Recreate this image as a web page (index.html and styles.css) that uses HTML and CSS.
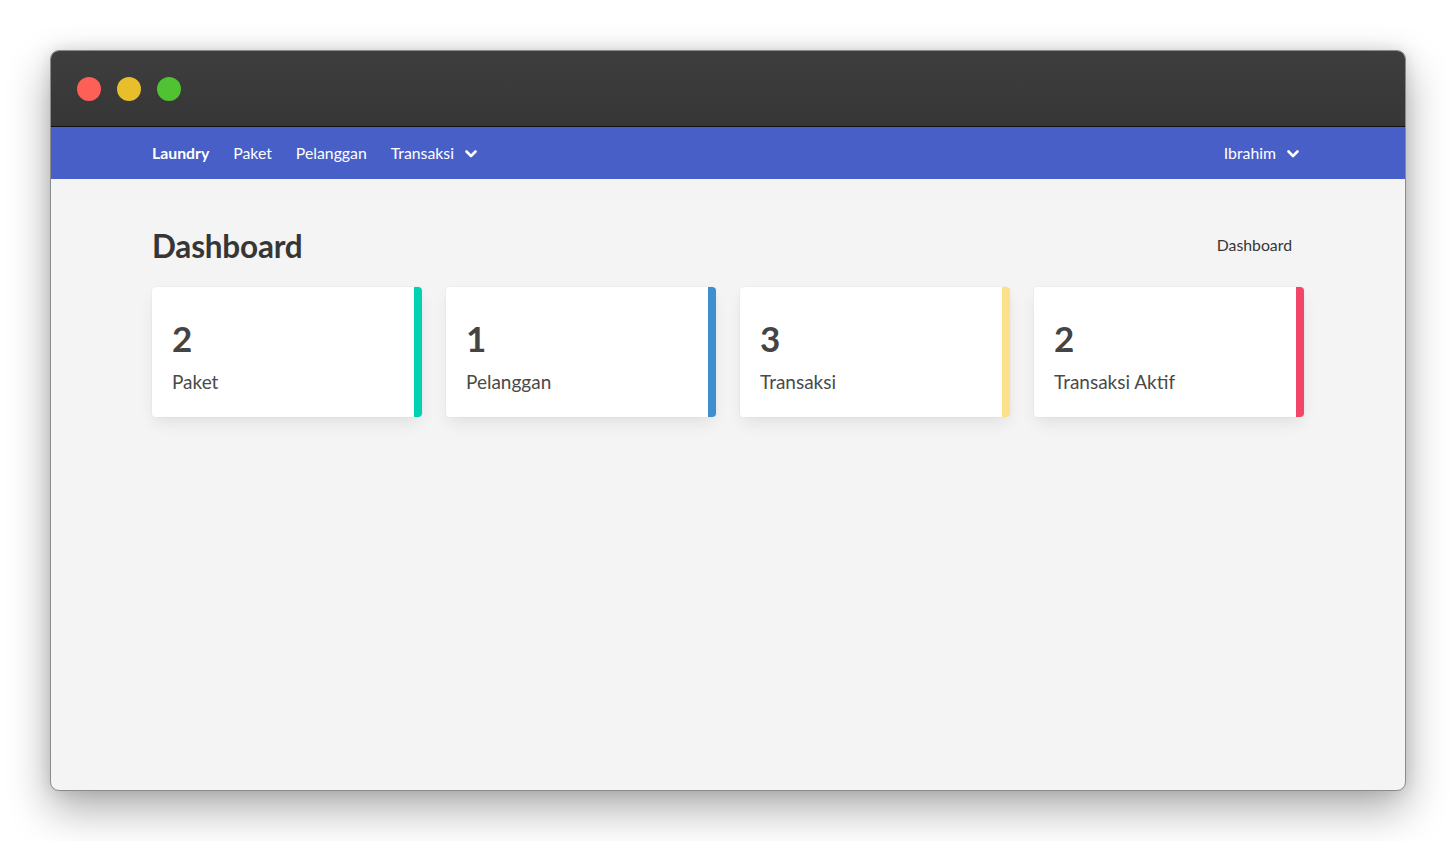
FILE: index.html
```html
<!DOCTYPE html>
<html>
<head>
<meta charset="utf-8">
<link rel="stylesheet" href="styles.css">
</head>
<body>
<div class="window">
  <div class="titlebar">
    <span class="dot red"></span>
    <span class="dot yellow"></span>
    <span class="dot green"></span>
  </div>
  <nav class="navbar">
    <div class="container nav-inner">
      <div class="nav-start">
        <a class="nav-item brand">Laundry</a>
        <a class="nav-item">Paket</a>
        <a class="nav-item">Pelanggan</a>
        <a class="nav-item">Transaksi
          <svg class="chev" viewBox="0 0 12 8" width="12" height="8"><path d="M1.5 1.5 L6 6 L10.5 1.5" fill="none" stroke="#fff" stroke-width="2.6" stroke-linecap="round" stroke-linejoin="round"/></svg>
        </a>
      </div>
      <div class="nav-end">
        <a class="nav-item">Ibrahim
          <svg class="chev" viewBox="0 0 12 8" width="12" height="8"><path d="M1.5 1.5 L6 6 L10.5 1.5" fill="none" stroke="#fff" stroke-width="2.6" stroke-linecap="round" stroke-linejoin="round"/></svg>
        </a>
      </div>
    </div>
  </nav>
  <main class="content">
    <div class="container">
      <div class="header-row">
        <h1 class="title">Dashboard</h1>
        <span class="crumb">Dashboard</span>
      </div>
      <div class="cards">
        <div class="card c-primary"><div class="num">2</div><div class="label">Paket</div></div>
        <div class="card c-info"><div class="num">1</div><div class="label">Pelanggan</div></div>
        <div class="card c-warning"><div class="num">3</div><div class="label">Transaksi</div></div>
        <div class="card c-danger"><div class="num">2</div><div class="label">Transaksi Aktif</div></div>
      </div>
    </div>
  </main>
</div>
</body>
</html>
```
FILE: styles.css
```css
* { box-sizing: border-box; }
html, body { margin: 0; padding: 0; background: #ffffff; }
body {
  font-family: "Lato", "Noto Sans", sans-serif;
  color: #4a4a4a;
  padding: 50px 50px 51px 50px;
  min-height: 841px;
}
.window {
  width: 1356px;
  height: 741px;
  border: 1px solid #8a8a8a;
  border-radius: 9px;
  overflow: hidden;
  background: #f4f4f4;
  box-shadow: 0 18px 44px rgba(0,0,0,0.33), 0 0 16px rgba(0,0,0,0.12);
  display: flex;
  flex-direction: column;
}
.titlebar {
  height: 76px;
  background: linear-gradient(#3e3e3e, #363636);
  border-bottom: 1px solid #111;
  display: flex;
  align-items: center;
  gap: 16px;
  padding-left: 26px;
  flex-shrink: 0;
}
.dot { width: 24px; height: 24px; border-radius: 50%; display: block; }
.red { background: #fe5f57; }
.yellow { background: #e8be2c; }
.green { background: #50c233; }
.navbar {
  height: 52px;
  background: #485fc7;
  flex-shrink: 0;
}
.container { width: 1152px; margin: 0 auto; }
.nav-inner {
  height: 100%;
  display: flex;
  justify-content: space-between;
  align-items: center;
  padding-bottom: 1px;
}
.nav-start, .nav-end { display: flex; align-items: center; gap: 24px; }
.nav-end { padding-right: 5px; }
.nav-item {
  color: #fff;
  font-size: 15.8px;
  display: flex;
  align-items: center;
  gap: 11px;
}
.brand { font-weight: 700; }
.chev { display: block; margin-top: 2px; }
.content { flex: 1; }
.header-row {
  display: flex;
  justify-content: space-between;
  padding-top: 47px;
  height: 108px;
  align-items: flex-start;
}
.title {
  margin: 0;
  font-size: 31.5px;
  font-weight: 700;
  color: #363636;
  line-height: 40px;
  letter-spacing: -0.2px;
}
.crumb {
  font-size: 15.8px;
  color: #363636;
  margin-right: 12px;
  line-height: 38px;
}
.cards {
  display: grid;
  grid-template-columns: repeat(4, 270px);
  gap: 24px;
}
.card {
  height: 130px;
  background: #fff;
  border-radius: 4px;
  border-right: 8px solid;
  box-shadow: 0 0.5em 1em -0.125em rgba(10,10,10,0.08), 0 0 0 1px rgba(10,10,10,0.02);
  padding: 29px 20px 0 20px;
}
.c-primary { border-right-color: #00d1b2; }
.c-info { border-right-color: #3e8ed0; }
.c-warning { border-right-color: #ffe08a; }
.c-danger { border-right-color: #f14668; }
.num {
  font-size: 35px;
  font-weight: 700;
  color: #444;
  line-height: 44px;
}
.label {
  font-size: 19px;
  color: #4a4a4a;
  margin-top: 11px;
  line-height: 22px;
}
```
